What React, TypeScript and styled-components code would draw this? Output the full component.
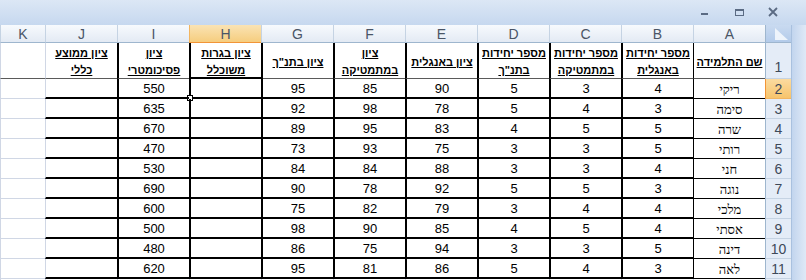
import React from "react";
import styled, { createGlobalStyle, css } from "styled-components";

const GlobalStyle = createGlobalStyle`
  html, body { margin: 0; padding: 0; background: #ffffff; overflow: hidden; }
  body { font-family: "Liberation Sans", Arial, sans-serif; }
`;

type Line = "thick" | "thin" | "mid" | "grid";

const lineCss = (l: Line) =>
  l === "thick"
    ? "2px solid #000000"
    : l === "thin"
    ? "1px solid #000000"
    : l === "mid"
    ? "1px solid #5a5a5a"
    : "1px solid #d0d7e5";

const Window = styled.div`
  width: 806px;
  height: 280px;
  overflow: hidden;
  display: flex;
  flex-direction: column;
  background: #ffffff;
`;

const TitleBand = styled.div`
  height: 25px;
  flex: none;
  box-sizing: border-box;
  background: linear-gradient(#dce7f5, #c6d8ef);
  display: flex;
  justify-content: flex-end;
  align-items: center;
  padding-right: 16px;
  padding-bottom: 2px;
`;

const Control = styled.div`
  width: 34px;
  height: 20px;
  display: flex;
  align-items: center;
  justify-content: center;
`;

const Body = styled.div`
  flex: 1;
  display: flex;
  direction: rtl;
  min-height: 0;
`;

const Scrollbar = styled.div`
  width: 15px;
  flex: none;
  box-sizing: border-box;
  background: linear-gradient(to right, #c2d5ee, #dfe9f7);
  border-left: 1px solid #a9c1df;
`;

const Sheet = styled.div`
  display: grid;
  direction: rtl;
  grid-template-columns: 26px repeat(10, 72px) 45px;
  grid-template-rows: 18px 36px repeat(11, 20px);
  flex: none;
`;

const Corner = styled.div`
  box-sizing: border-box;
  background: linear-gradient(#c9daf0, #b3cbea);
  border-left: 1px solid #9eb6ce;
  border-bottom: 1px solid #9eb6ce;
  display: flex;
  align-items: flex-end;
  justify-content: flex-start;
  padding: 0 3px 2px 0;
`;

const ColHead = styled.div<{ $active?: boolean }>`
  box-sizing: border-box;
  display: flex;
  align-items: center;
  justify-content: center;
  font-size: 14px;
  color: #4a5566;
  border-left: 1px solid #c5d3e3;
  border-bottom: 1px solid #9eb6ce;
  background: linear-gradient(#f7fafd, #e3eaf4);
  ${(p) =>
    p.$active &&
    css`
      background: linear-gradient(#fae3b4, #f6cd7e);
      border-bottom: 1px solid #f29436;
      border-left: 1px solid #f2b560;
    `}
`;

const RowHead = styled.div<{ $active?: boolean; $tall?: boolean }>`
  box-sizing: border-box;
  display: flex;
  align-items: ${(p) => (p.$tall ? "flex-end" : "center")};
  justify-content: center;
  padding-bottom: ${(p) => (p.$tall ? "3px" : "0")};
  font-size: 14px;
  color: #3e4959;
  background: #e4ecf7;
  border-left: 1px solid #9eb6ce;
  border-bottom: 1px solid #c5d3e3;
  ${(p) =>
    p.$active &&
    css`
      background: linear-gradient(#fbdba0, #f7c46c);
      border-left: 1px solid #f29436;
      border-bottom: 1px solid #f2b560;
    `}
`;

const Cell = styled.div<{ $left: Line; $bottom: Line }>`
  box-sizing: border-box;
  position: relative;
  border-left: ${(p) => lineCss(p.$left)};
  border-bottom: ${(p) => lineCss(p.$bottom)};
  display: flex;
  flex-direction: column;
  align-items: center;
  justify-content: center;
  text-align: center;
  color: #000000;
  min-width: 0;
`;

const NumText = styled.span`
  font-family: "Liberation Sans", Arial, sans-serif;
  font-size: 13px;
  line-height: 16px;
  padding-top: 2px;
`;

const NameText = styled.span`
  font-family: "Liberation Serif", "Times New Roman", serif;
  font-size: 13px;
  line-height: 16px;
  padding-top: 2px;
`;

const HeadText = styled.span`
  font-family: "Liberation Sans", Arial, sans-serif;
  font-weight: bold;
  font-size: 11px;
  line-height: 17px;
  text-decoration: underline;
  white-space: nowrap;
`;

const HeadLines = styled.div`
  display: flex;
  flex-direction: column;
  align-items: center;
  padding-top: 3px;
`;

const Selection = styled.div`
  position: absolute;
  top: -2px;
  right: -2px;
  bottom: -2px;
  left: -2px;
  border: 2px solid #000000;
  pointer-events: none;
`;

const FillHandle = styled.div`
  position: absolute;
  left: -4px;
  bottom: -4px;
  width: 4px;
  height: 4px;
  background: #ffffff;
  border: 1px solid #000000;
`;

const colLetters = ["A", "B", "C", "D", "E", "F", "G", "H", "I", "J", "K"];

const headers: string[][] = [
  ["שם התלמידה"],
  ["מספר יחידות", "באנגלית"],
  ["מספר יחידות", "במתמטיקה"],
  ["מספר יחידות", 'בתנ"ך'],
  ["ציון באנגלית"],
  ["ציון", "במתמטיקה"],
  ['ציון בתנ"ך'],
  ["ציון בגרות", "משוכלל"],
  ["ציון", "פסיכומטרי"],
  ["ציון ממוצע", "כללי"],
  [],
];

const rows: (string | number)[][] = [
  ["ריקי", 4, 3, 5, 90, 85, 95, "", 550, "", ""],
  ["סימה", 3, 4, 5, 78, 98, 92, "", 635, "", ""],
  ["שרה", 5, 5, 4, 83, 95, 89, "", 670, "", ""],
  ["רותי", 5, 3, 3, 75, 93, 73, "", 470, "", ""],
  ["חני", 4, 3, 3, 88, 84, 84, "", 530, "", ""],
  ["נוגה", 3, 5, 5, 92, 78, 90, "", 690, "", ""],
  ["מלכי", 4, 4, 3, 79, 82, 75, "", 600, "", ""],
  ["אסתי", 4, 5, 4, 85, 90, 98, "", 500, "", ""],
  ["דינה", 5, 3, 3, 94, 75, 86, "", 480, "", ""],
  ["לאה", 3, 4, 5, 86, 81, 95, "", 620, "", ""],
];

// column index: 0 = A ... 10 = K ; row: 1 = header row, 2..11 data, 12 extra
const leftLine = (c: number, r: number): Line => {
  if (r === 12) return "grid";
  if (c === 0) return "thin";
  if (c >= 1 && c <= 8) return "thick";
  return "grid";
};

const bottomLine = (c: number, r: number): Line => {
  if (r === 1) return "mid";
  if (r === 12) return "grid";
  if (c === 0) return "thin";
  if (c >= 1 && c <= 9) return "thick";
  return "grid";
};

const Minimize = () => (
  <svg width="10" height="10" viewBox="0 0 10 10">
    <rect x="1" y="6" width="7" height="2" fill="#5b6b83" />
  </svg>
);

const Restore = () => (
  <svg width="11" height="10" viewBox="0 0 11 10">
    <rect x="1.5" y="2.5" width="8" height="6" fill="none" stroke="#5b6b83" strokeWidth="1" />
    <rect x="1" y="2" width="9" height="2" fill="#5b6b83" />
  </svg>
);

const Close = () => (
  <svg width="10" height="10" viewBox="0 0 10 10">
    <path d="M1 1 L9 9 M9 1 L1 9" stroke="#5b6b83" strokeWidth="1.8" />
  </svg>
);

const SelectAll = () => (
  <svg width="13" height="12" viewBox="0 0 13 12">
    <polygon points="0,0 0,12 13,12" fill="#eef4fb" />
  </svg>
);

export default function App() {
  return (
    <>
      <GlobalStyle />
      <Window>
        <TitleBand>
          <Control>
            <Minimize />
          </Control>
          <Control>
            <Restore />
          </Control>
          <Control>
            <Close />
          </Control>
        </TitleBand>
        <Body>
          <Scrollbar />
          <Sheet>
            <Corner>
              <SelectAll />
            </Corner>
            {colLetters.map((l) => (
              <ColHead key={l} $active={l === "H"}>
                {l}
              </ColHead>
            ))}

            <RowHead $tall>1</RowHead>
            {headers.map((lines, c) => (
              <Cell key={`h${c}`} $left={leftLine(c, 1)} $bottom={bottomLine(c, 1)}>
                {lines.length > 0 && (
                  <HeadLines>
                    {lines.map((t, i) => (
                      <HeadText key={i}>{t}</HeadText>
                    ))}
                  </HeadLines>
                )}
              </Cell>
            ))}

            {rows.map((row, ri) => {
              const r = ri + 2;
              return (
                <React.Fragment key={r}>
                  <RowHead $active={r === 2}>{r}</RowHead>
                  {row.map((v, c) => (
                    <Cell key={c} $left={leftLine(c, r)} $bottom={bottomLine(c, r)}>
                      {c === 0 ? (
                        <NameText>{v}</NameText>
                      ) : v !== "" ? (
                        <NumText>{v}</NumText>
                      ) : null}
                      {r === 2 && c === 7 && (
                        <Selection>
                          <FillHandle />
                        </Selection>
                      )}
                    </Cell>
                  ))}
                </React.Fragment>
              );
            })}

            <RowHead />
            {colLetters.map((l, c) => (
              <Cell key={`e${l}`} $left={leftLine(c, 12)} $bottom={bottomLine(c, 12)} />
            ))}
          </Sheet>
        </Body>
      </Window>
    </>
  );
}
